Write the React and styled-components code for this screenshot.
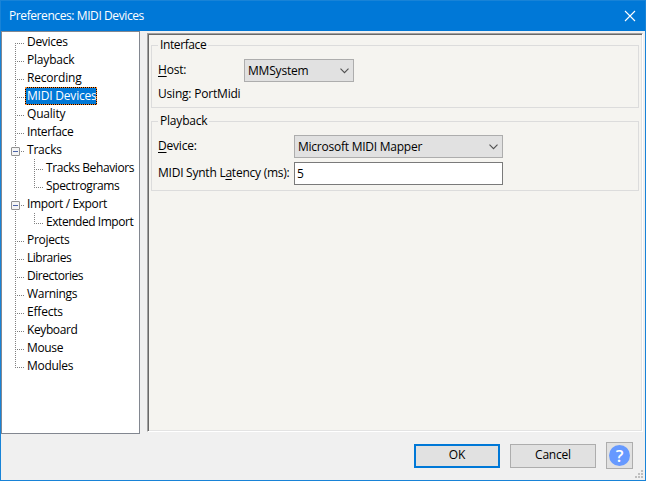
import React from "react";
import styled, { createGlobalStyle } from "styled-components";

const Global = createGlobalStyle`
  * { box-sizing: border-box; }
  body { margin: 0; }
`;

const Window = styled.div`
  display: flex;
  flex-direction: column;
  width: 646px;
  height: 481px;
  background: #f0f0f0;
  border: 1px solid #1883d7;
  font: 12px/18px "Open Sans", "Noto Sans", sans-serif;
  letter-spacing: -0.2px;
  color: #000;
  white-space: nowrap;
  overflow: hidden;
`;

const TitleBar = styled.header`
  display: flex;
  align-items: center;
  justify-content: space-between;
  flex: none;
  height: 30px;
  padding: 0 9px 0 8px;
  background: #0078d7;
  color: #fff;
`;

const Label = styled.span`
  letter-spacing: ${(p) => p.$ls ?? -0.2}px;
`;

const Main = styled.main`
  display: flex;
  flex: none;
  height: 403px;
`;

const Tree = styled.ul`
  width: 139px;
  height: 403px;
  margin: 0 7px 0 0;
  padding: 1px 0 0 13px;
  border: 1px solid #828790;
  background: #fff;
  list-style: none;
`;

const TreeItem = styled.li`
  display: flex;
  height: 18px;
`;

const Branch = styled.svg`
  flex: none;
  display: block;
  width: ${(p) => (p.$child ? 29 : 10)}px;
  height: 18px;
  overflow: visible;
`;

const ItemText = styled.span`
  height: 18px;
  padding: 0 2px;
  line-height: 18px;
  letter-spacing: ${(p) => p.$ls ?? -0.2}px;
  ${(p) =>
    p.$selected &&
    `width: 72px; background: #0078d7; color: #fff; box-shadow: inset 0 0 0 1px #000; outline: 1px dotted #ff8728; outline-offset: -1px;`}
`;

const Panel = styled.section`
  width: 496px;
  height: 399px;
  margin-top: 2px;
  padding: 2px 2px 1px;
  background: #f5f4f0;
  border: 1px solid;
  border-color: #a0a0a0 #fff #fff #a0a0a0;
  box-shadow: inset 1px 1px #696969, inset -1px -1px #e3e3e3;
`;

const Group = styled.fieldset`
  width: 488px;
  height: ${(p) => p.$h}px;
  margin: 0 0 ${(p) => p.$gap || 0}px 1px;
  padding: 0 0 0 6px;
  border: 1px solid #dcdcdc;
`;

const Legend = styled.legend`
  height: 18px;
  padding: 0 2px;
  letter-spacing: ${(p) => p.$ls ?? -0.2}px;
`;

const Row = styled.div`
  display: flex;
  align-items: center;
  height: ${(p) => p.$h || 23}px;
  margin-top: ${(p) => p.$mt || 0}px;
`;

const Caption = styled.label`
  width: ${(p) => p.$w}px;
  letter-spacing: ${(p) => p.$ls ?? -0.2}px;
  padding-bottom: 2px;
`;

const Key = styled.span`
  text-decoration: underline;
  text-decoration-thickness: 1px;
  text-underline-offset: 2px;
  text-decoration-skip-ink: none;
`;

const Select = styled.div`
  display: flex;
  align-items: center;
  justify-content: space-between;
  width: ${(p) => p.$w}px;
  height: 23px;
  padding: 0 4px 0 3px;
  background: #e1e1e1;
  border: 1px solid #adadad;
`;

const Input = styled.input`
  width: 209px;
  height: 23px;
  padding: 0 2px 1px;
  border: 1px solid #7a7a7a;
  border-radius: 0;
  background: #fff;
  font: inherit;
  outline: none;
`;

const Footer = styled.footer`
  position: relative;
  display: flex;
  justify-content: flex-end;
  align-items: center;
  gap: 10px;
  height: 46px;
  padding-right: 12px;
  padding-bottom: 3px;
`;

const Button = styled.button`
  width: 86px;
  height: 24px;
  padding: 0 0 1px;
  background: #e1e1e1;
  border: ${(p) => (p.$primary ? "2px solid #0078d7" : "1px solid #adadad")};
  font: inherit;
  letter-spacing: -0.2px;
  color: #000;
`;

const HelpButton = styled(Button)`
  width: 27px;
  height: 27px;
  padding: 2px;
`;

const HelpMark = styled.span`
  display: block;
  width: 21px;
  height: 21px;
  border-radius: 50%;
  background: #6699ff;
  color: #fff;
  font: 600 17px/21px "Open Sans", sans-serif;
  letter-spacing: 0;
  text-align: center;
`;

const Grip = styled.svg`
  position: absolute;
  right: 2px;
  bottom: 2px;
`;

const items = [
  { text: "Devices", ls: -0.3 },
  { text: "Playback" },
  { text: "Recording" },
  { text: "MIDI Devices", selected: true },
  { text: "Quality" },
  { text: "Interface", ls: -0.4 },
  { text: "Tracks", open: true },
  { text: "Tracks Behaviors", child: true, ls: -0.4 },
  { text: "Spectrograms", child: true, lastChild: true, ls: -0.36 },
  { text: "Import / Export", open: true, ls: -0.38 },
  { text: "Extended Import", child: true, lastChild: true, ls: -0.45 },
  { text: "Projects", ls: -0.3 },
  { text: "Libraries", ls: -0.5 },
  { text: "Directories", ls: -0.45 },
  { text: "Warnings", ls: -0.3 },
  { text: "Effects" },
  { text: "Keyboard", ls: -0.4 },
  { text: "Mouse", ls: -0.35 },
  { text: "Modules", ls: -0.3 },
];

function Lines({ item, first, last }) {
  const dots = { stroke: "#808080", strokeDasharray: "1 1", shapeRendering: "crispEdges" };
  return (
    <Branch $child={item.child}>
      <path d={`M0.5 ${first ? 10 : 0}V${last ? 11 : 18}`} {...dots} />
      {item.child ? (
        <>
          <path d={`M19.5 0V${item.lastChild ? 11 : 18}`} {...dots} />
          <path d="M19 10.5H28" {...dots} />
        </>
      ) : (
        <path d="M0 10.5H9" {...dots} />
      )}
      {item.open && (
        <g>
          <rect x="-3.5" y="6.5" width="8" height="8" rx="0.5" fill="#f4f4f4" stroke="#919191" />
          <path d="M-2 10.5H3" stroke="#4b63a7" shapeRendering="crispEdges" />
        </g>
      )}
    </Branch>
  );
}

const Chevron = () => (
  <svg width="9" height="6" viewBox="0 0 9 6" fill="none">
    <path d="M0.5 0.7L4.5 4.7L8.5 0.7" stroke="#505050" strokeWidth="1.1" />
  </svg>
);

export default function App() {
  return (
    <>
      <Global />
      <Window>
        <TitleBar>
          <Label $ls={-0.41}>Preferences: MIDI Devices</Label>
          <svg width="12" height="12" viewBox="0 0 12 12">
            <path d="M1 1L11 11M11 1L1 11" stroke="#fff" strokeWidth="1.1" />
          </svg>
        </TitleBar>
        <Main>
          <Tree>
            {items.map((item, i) => (
              <TreeItem key={item.text}>
                <Lines item={item} first={i === 0} last={i === items.length - 1} />
                <ItemText $selected={item.selected} $ls={item.ls}>{item.text}</ItemText>
              </TreeItem>
            ))}
          </Tree>
          <Panel>
            <Group $h={72} $gap={4}>
              <Legend $ls={-0.4}>Interface</Legend>
              <Row $mt={5}>
                <Caption $w={86}><Key>H</Key>ost:</Caption>
                <Select $w={110}><Label>MMSystem</Label><Chevron /></Select>
              </Row>
              <Row $h={18} $mt={3}>Using: PortMidi</Row>
            </Group>
            <Group $h={79}>
              <Legend>Playback</Legend>
              <Row $mt={5}>
                <Caption $w={136}><Key>D</Key>evice:</Caption>
                <Select $w={209}><Label $ls={-0.24}>Microsoft MIDI Mapper</Label><Chevron /></Select>
              </Row>
              <Row $mt={4}>
                <Caption $w={136} $ls={-0.24}>MIDI Synth L<Key>a</Key>tency (ms):</Caption>
                <Input defaultValue="5" />
              </Row>
            </Group>
          </Panel>
        </Main>
        <Footer>
          <Button $primary>OK</Button>
          <Button>Cancel</Button>
          <HelpButton><HelpMark>?</HelpMark></HelpButton>
          <Grip width="8" height="8" fill="#bfbfbf">
            <path d="M6 0h2v2h-2zM3 3h2v2h-2zM6 3h2v2h-2zM0 6h2v2h-2zM3 6h2v2h-2zM6 6h2v2h-2z" />
          </Grip>
        </Footer>
      </Window>
    </>
  );
}
